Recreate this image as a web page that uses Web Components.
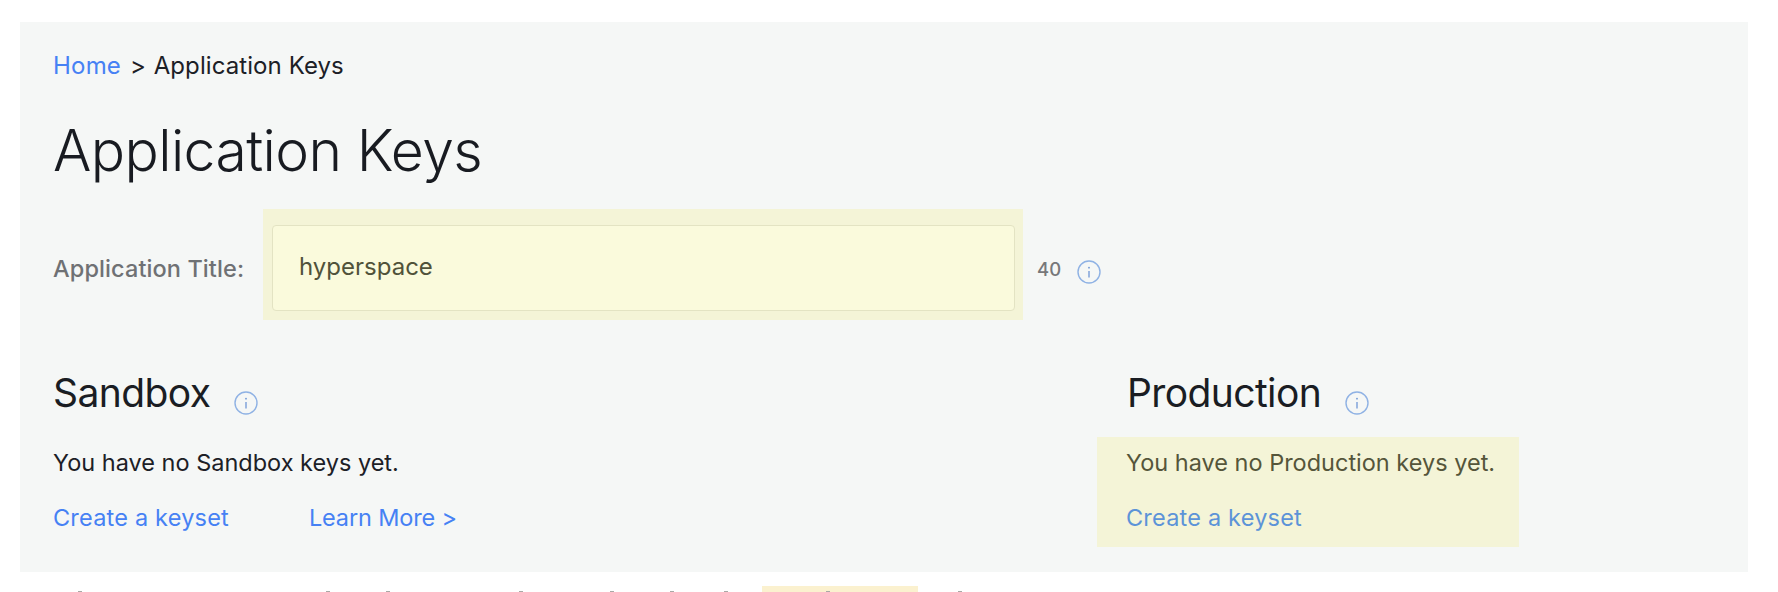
<!DOCTYPE html>
<html><head><meta charset="utf-8">
<style>
html,body{margin:0;padding:0;background:#fff;height:592px;overflow:hidden;font-family:"Inter","Liberation Sans",sans-serif;}
</style></head><body>
<keys-page>
  <bread-crumb slot="crumb"><a-link>Home</a-link></bread-crumb>
  <title-field slot="field" label="Application Title:" value="hyperspace" count="40"></title-field>
  <key-section slot="sandbox" heading="Sandbox" env="Sandbox">
    <a-link>Create a keyset</a-link><a-link tight style="margin-left:80px">Learn More &gt;</a-link>
  </key-section>
  <key-section slot="production" heading="Production" env="Production" highlight>
    <a-link muted>Create a keyset</a-link>
  </key-section>
</keys-page>
<footer-strip></footer-strip>
<script>
const INFO=`<svg width="24" height="24" viewBox="0 0 24 24" fill="none" style="display:block"><circle cx="12" cy="12" r="11" stroke="#8fb2e4" stroke-width="1.4"/><path d="M12 11v6.5" stroke="#6f97d6" stroke-width="1.3"/><circle cx="12" cy="7.7" r=".9" fill="#6f97d6"/></svg>`;
class Base extends HTMLElement{
  render(html){this.attachShadow({mode:'open'}).innerHTML=html;}
}
customElements.define('a-link',class extends Base{connectedCallback(){if(this.shadowRoot)return;
  this.render(`<style>:host{display:inline;letter-spacing:${this.hasAttribute('tight')?'-.15px':'.2px'};color:${this.hasAttribute('muted')?'#5c93d8':'#4681f4'}}</style><slot></slot>`);}});
customElements.define('info-icon',class extends Base{connectedCallback(){if(this.shadowRoot)return;
  this.render(`<style>:host{display:block;width:24px;height:24px}</style>${INFO}`);}});
customElements.define('bread-crumb',class extends Base{connectedCallback(){if(this.shadowRoot)return;
  this.render(`<style>:host{display:block;font-size:24px;line-height:30px;color:#1c2026;letter-spacing:.08px}
  .sep{margin:0 1px 0 2px}</style><slot></slot> <span class="sep">&gt;</span> Application Keys`);}});
customElements.define('title-field',class extends Base{connectedCallback(){if(this.shadowRoot)return;
  const g=a=>this.getAttribute(a);
  this.render(`<style>
  :host{display:flex;align-items:center}
  .label{width:210px;font-size:23.5px;color:#6f7174;letter-spacing:.1px;font-weight:500;padding-top:7px}
  .halo{background:#f4f4d7;padding:16px 8px 9px 9px;width:743px;box-sizing:content-box}
  .input{box-sizing:border-box;height:86px;background:#fafadc;border:1.5px solid #e3e3c3;border-radius:4px;padding:0 26px 3px;display:flex;align-items:center;font-size:24px;color:#50523a}
  .count{margin-left:14px;font-size:18.5px;color:#77787a;font-weight:500;width:40px;padding-top:8px}
  info-icon{margin-top:14px}
  </style><div class="label">${g('label')}</div><div class="halo"><div class="input">${g('value')}</div></div><div class="count">${g('count')}</div><info-icon></info-icon>`);}});
customElements.define('key-section',class extends Base{connectedCallback(){if(this.shadowRoot)return;
  const g=a=>this.getAttribute(a),hi=this.hasAttribute('highlight');
  this.render(`<style>
  :host{display:block}
  .head{display:flex;align-items:flex-start;height:67px}
  h2{margin:0;font-weight:400;font-size:39px;line-height:46px;color:#1a1d23;letter-spacing:-.6px}
  info-icon{margin-left:24px;margin-top:21px}
  .body{font-size:23.5px;color:${hi?'#55553a':'#1c2026'};${hi?'background:#f4f4d7;margin-left:-30px;padding:0 24px 0 29px;':''}height:110px;display:flex;flex-direction:column;width:max-content}
  .msg{line-height:30px;margin-top:11px}.links{line-height:30px;margin-top:25px}
  </style><div class="head"><h2>${g('heading')}</h2><info-icon></info-icon></div>
  <div class="body"><div class="msg">You have no ${g('env')} keys yet.</div><div class="links"><slot></slot></div></div>`);}});
customElements.define('keys-page',class extends Base{connectedCallback(){if(this.shadowRoot)return;
  this.render(`<style>
  :host{display:block;margin:22px 30px 0 20px;background:#f5f7f6;height:550px;box-sizing:border-box;padding:29px 33px 0}
  h1{margin:37px 0 0;font-weight:300;font-size:57px;line-height:66px;color:#181b21;letter-spacing:-.6px}
  .field{margin-top:25px}
  .cols{display:flex;margin-top:50px}
  .a{width:1074px}
  </style><slot name="crumb"></slot><h1>Application Keys</h1>
  <div class="field"><slot name="field"></slot></div>
  <div class="cols"><div class="a"><slot name="sandbox"></slot></div><div><slot name="production"></slot></div></div>`);}});
customElements.define('footer-strip',class extends Base{connectedCallback(){if(this.shadowRoot)return;
  const xs=[78,326,386,519,610,670,724,826,958];
  let prev=0;
  const marks=xs.map(x=>{const m=x-prev;prev=x+4;return `<i style="margin-left:${m}px"></i>`}).join('');
  this.render(`<style>:host{display:block;position:relative;height:20px}
  .row{display:flex;padding-top:19px}
  i{display:block;width:4px;height:1px;background:#a9a9a6;position:relative}
  .h{position:absolute;left:762px;top:14px;width:156px;height:6px;background:#fbf1cf}</style><div class="h"></div><div class="row">${marks}</div>`);}});
</script>
</body></html>
